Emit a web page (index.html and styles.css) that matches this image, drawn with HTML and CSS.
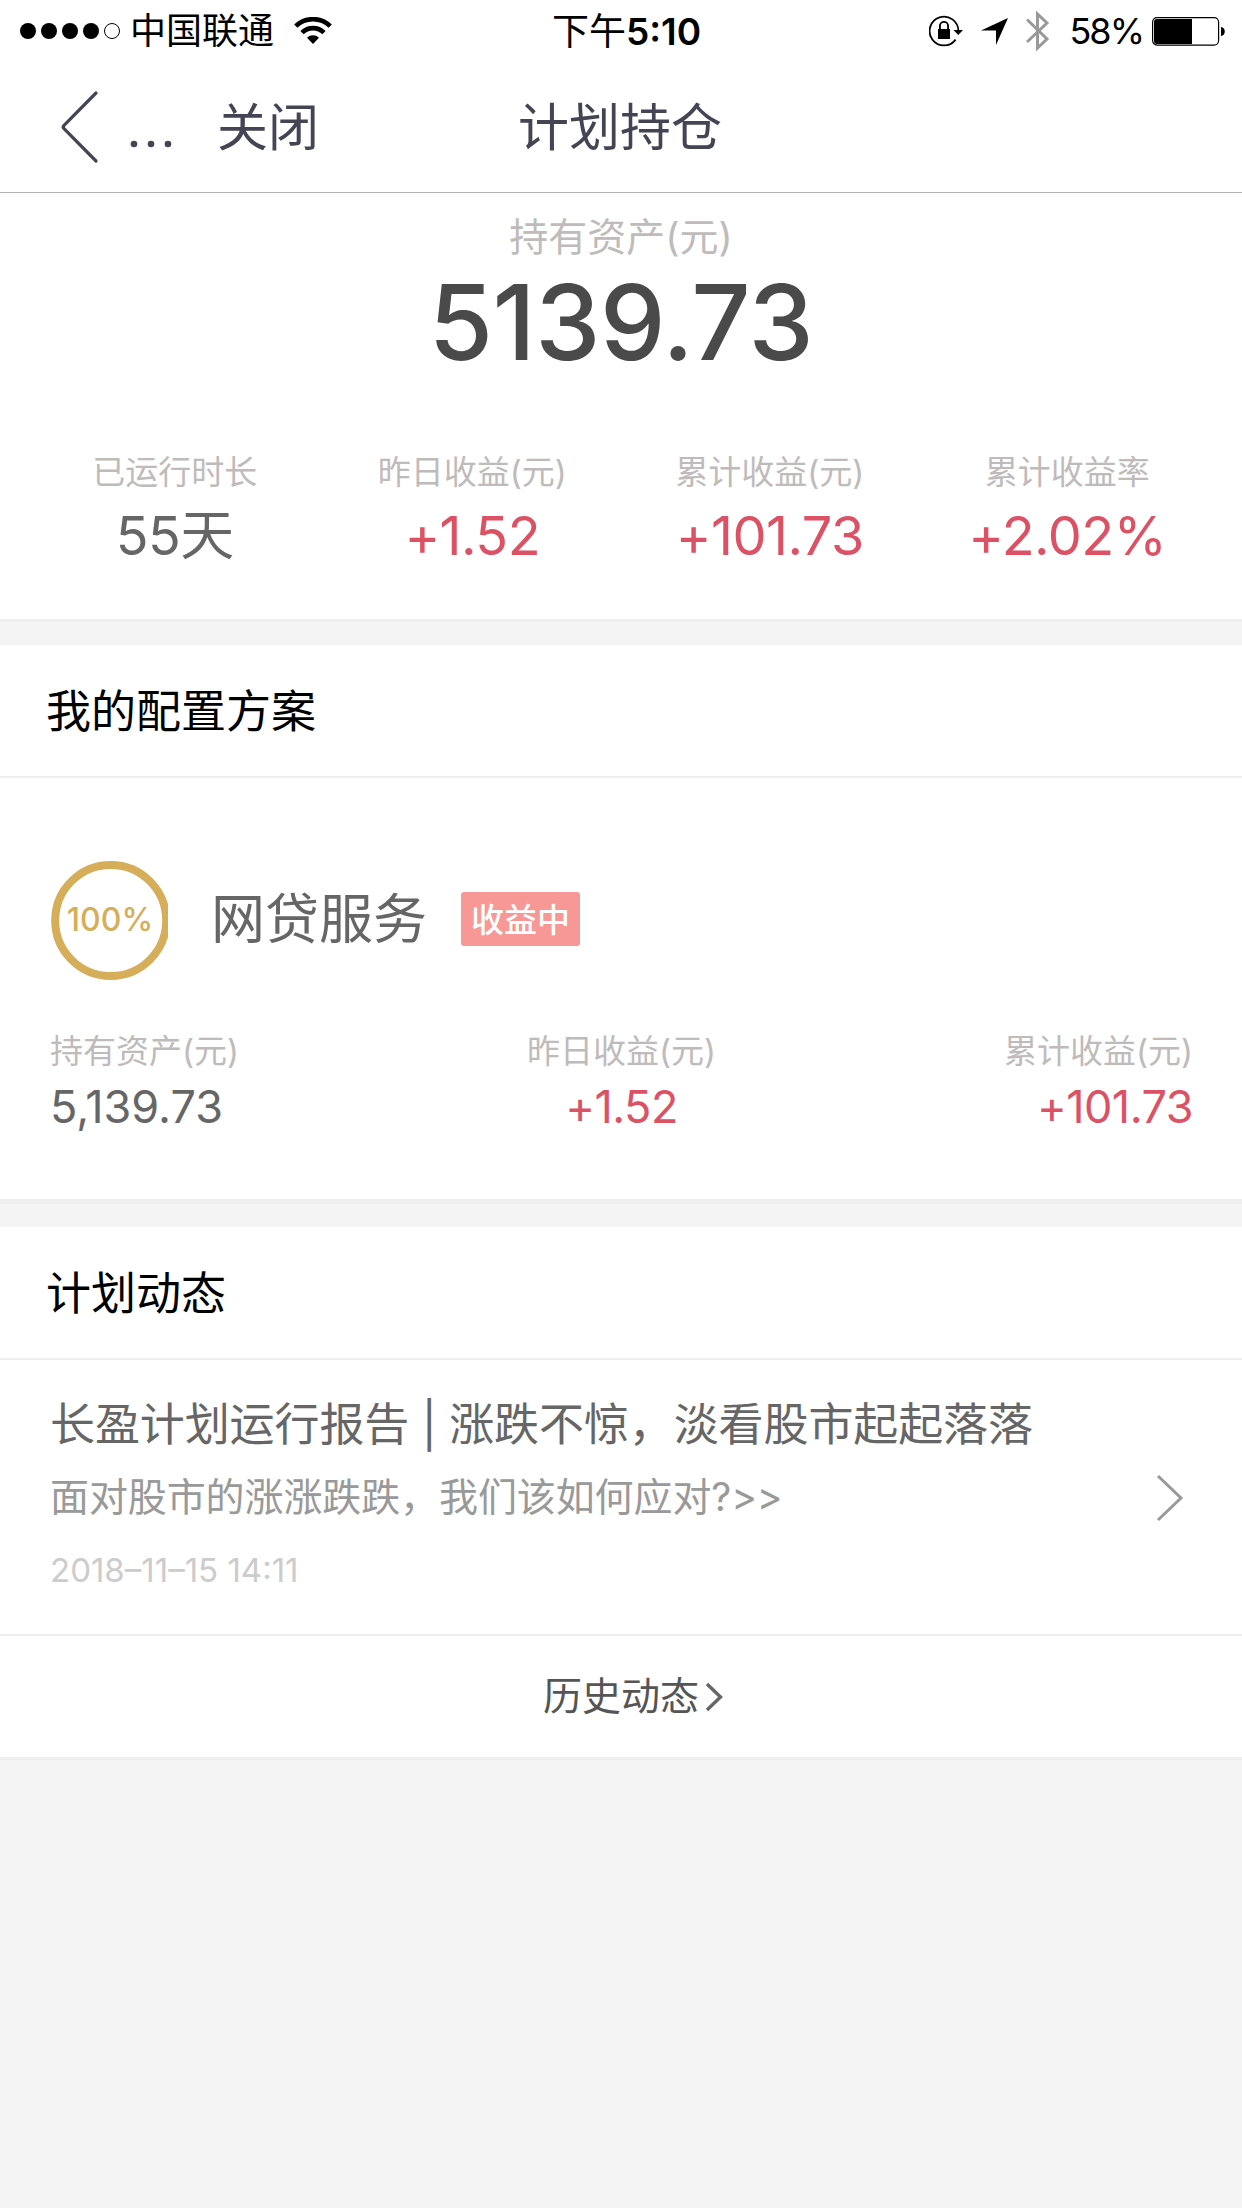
FILE: index.html
```
<!DOCTYPE html>
<html lang="zh-CN">
<head>
    <meta charset="UTF-8">
    <title>计划持仓</title>
    <link rel="stylesheet" href="styles.css">
</head>
<body>

<!-- status bar -->
<div class="status">
    <div class="status-left">
        <svg class="signal" width="96" height="18" viewBox="0 0 96 18">
            <circle cx="9" cy="9" r="8"/><circle cx="30" cy="9" r="8"/><circle cx="51" cy="9" r="8"/><circle cx="72" cy="9" r="8"/>
            <circle cx="93" cy="9" r="7.5" fill="none" stroke="#000" stroke-width="1"/>
        </svg>
        <span class="carrier">中国联通</span>
        <svg class="wifi" width="38" height="28" viewBox="0 0 38 28">
            <path d="M1.8 9.2a24.5 24.5 0 0 1 34.4 0M8 15.7a15.6 15.6 0 0 1 22 0" fill="none" stroke="#000" stroke-width="4.6"/>
            <path d="M13 20.8a8.5 8.5 0 0 1 12 0L19 27z"/>
        </svg>
    </div>
    <div class="time">下午<b>5:10</b></div>
    <div class="status-right">
        <svg width="34" height="32" viewBox="0 0 34 32">
            <path d="M26.6 24.6A14.4 14.4 0 1 1 29.4 16" fill="none" stroke="#000" stroke-width="1.8"/>
            <path d="M24.500 15h9.500l-4.700 5z"/>
            <path d="M9 14h12v10H9z"/>
            <path d="M10.900 15v-4a4.100 4.100 0 0 1 8.200 0v4" fill="none" stroke="#000" stroke-width="1.900"/>
        </svg>
        <svg class="arrow" width="27" height="27" viewBox="0 0 27 27"><path d="M27 0L15 27V12.500H0z"/></svg>
        <svg class="bluetooth" width="24" height="42" viewBox="0 0 24 42">
            <path d="M1 9.500L21 29L11.500 38V4L21 13L1 32" fill="none" stroke="#999" stroke-width="3"/>
        </svg>
        <span class="percent">58%</span>
        <svg width="74" height="30" viewBox="0 0 74 30">
            <rect x=".6" y="1.600" width="66" height="27.500" rx="4.500" fill="none" stroke="#000" stroke-width="1.200"/>
            <path d="M5 3h35v25H5a3 3 0 0 1-3-3V6a3 3 0 0 1 3-3zM69 11c5 0 5 9 0 9z"/>
        </svg>
    </div>
</div>

<!-- nav bar -->
<div class="nav">
    <svg class="back" width="40" height="76" viewBox="0 0 40 76">
        <path d="M36 4L4 36.300Q2.300 38 4 39.700L36 72" fill="none" stroke="#444455" stroke-width="3.200" stroke-linecap="round"/>
    </svg>
    <svg class="more" width="42" height="8" viewBox="0 0 42 8"><circle cx="4" cy="4" r="3.300"/><circle cx="21" cy="4" r="3.300"/><circle cx="38" cy="4" r="3.300"/></svg>
    <span class="close">关闭</span>
    <h1>计划持仓</h1>
</div>

<!-- total assets -->
<div class="summary">
    <div class="total-label">持有资产(元)</div>
    <div class="total">5139.73</div>
    <div class="stats">
        <div class="stat"><div class="label">已运行时长</div><div class="value">55天</div></div>
        <div class="stat"><div class="label">昨日收益(元)</div><div class="value red">+1.52</div></div>
        <div class="stat"><div class="label">累计收益(元)</div><div class="value red">+101.73</div></div>
        <div class="stat"><div class="label">累计收益率</div><div class="value red">+2.02%</div></div>
    </div>
</div>

<!-- my plan -->
<div class="card plan">
    <h2>我的配置方案</h2>
    <div class="plan-head">
        <div class="ring">
            <svg width="117" height="120" viewBox="0 0 117 120"><circle cx="59.700" cy="60.500" r="55.500" fill="none" stroke="#d6ae5a" stroke-width="8"/></svg>
            <span>100%</span>
        </div>
        <div class="plan-name">网贷服务</div>
        <div class="badge">收益中</div>
    </div>
    <div class="plan-data">
        <div class="item"><div class="label">持有资产(元)</div><div class="num">5,139.73</div></div>
        <div class="item center"><div class="label">昨日收益(元)</div><div class="num red">+1.52</div></div>
        <div class="item right"><div class="label">累计收益(元)</div><div class="num red">+101.73</div></div>
    </div>
</div>

<!-- news -->
<div class="card news">
    <h2>计划动态</h2>
    <div class="news-item">
        <div class="news-text">
            <div class="news-title">长盈计划运行报告 | 涨跌不惊，淡看股市起起落落</div>
            <div class="news-desc">面对股市的涨涨跌跌，我们该如何应对?&gt;&gt;</div>
            <div class="news-date">2018–11–15 14:11</div>
        </div>
        <svg width="28" height="48" viewBox="0 0 28 48"><path d="M2 2l23 22L2 46" fill="none" stroke="#999" stroke-width="3"/></svg>
    </div>
    <div class="history">
        <span>历史动态</span>
        <svg width="18" height="30" viewBox="0 0 18 30"><path d="M2 2l13.500 13L2 28" fill="none" stroke="#666" stroke-width="3.400"/></svg>
    </div>
</div>

</body>
</html>
```
FILE: styles.css
```
* {
    box-sizing: border-box;
}
body {
    margin: 0;
    background: #f4f4f4;
    font-family: Inter, "Noto Sans CJK SC", sans-serif;
    color: #666;
}
h1, h2 {
    margin: 0;
    font-weight: 400;
}
svg {
    display: block;
    flex: none;
}
.red {
    color: #dc5264;
}

/* status bar */
.status {
    display: grid;
    grid-template-columns: 1fr auto 1fr;
    align-items: center;
    height: 60px;
    padding: 0 16px 0 19px;
    background: #fff;
    color: #000;
    font-size: 36px;
    line-height: 63px;
}
.status-left, .status-right {
    display: flex;
    align-items: center;
    height: 60px;
}
.status-right {
    justify-content: flex-end;
}
.status svg {
    margin-top: -1px;
}
.signal {
    overflow: visible;
}
.carrier {
    margin-left: 15px;
}
.wifi {
    margin-left: 20px;
}
.time {
    padding-left: 8px;
    font-size: 37px;
}
.time b {
    font-weight: 600;
}
.arrow {
    margin-left: 18px;
}
.bluetooth {
    margin-left: 18px;
}
.percent {
    margin: 0 9px 0 19px;
    letter-spacing: -2px;
}

/* nav bar */
.nav {
    display: grid;
    grid-template-columns: 70px 87px 301px auto;
    align-items: center;
    height: 133px;
    padding-left: 60px;
    border-bottom: 1px solid #b2b2b2;
    background: #fff;
    color: #444455;
    fill: #444455;
    font-size: 51px;
    line-height: 135px;
}
.nav .back {
    margin-top: -2px;
}
.nav .more {
    margin-top: 32px;
}
.nav h1 {
    font-size: 51px;
}

/* total assets */
.summary {
    height: 429px;
    padding-top: 15px;
    background: #fff;
    border-bottom: 3px solid #eee;
    text-align: center;
}
.total-label {
    font-size: 39px;
    line-height: 58px;
    color: #bfbbbb;
}
.total {
    font-size: 104px;
    font-weight: 500;
    line-height: 112px;
    letter-spacing: -0.5px;
    color: #4a4a4a;
}
.stats {
    display: grid;
    grid-template-columns: repeat(4, 1fr);
    padding: 72px 26px 0;
}
.label {
    font-size: 33px;
    line-height: 44px;
    color: #bfbbbb;
}
.value {
    font-size: 54px;
    line-height: 84px;
    letter-spacing: -0.5px;
}

/* cards */
.card {
    margin-top: 23px;
    background: #fff;
}
.card h2 {
    height: 133px;
    padding-left: 46px;
    border-bottom: 2px solid #eee;
    color: #000;
    font-size: 45px;
    line-height: 134px;
}
.plan {
    height: 559px;
    border-bottom: 5px solid #eee;
}
.plan-head {
    display: flex;
    align-items: center;
    padding: 82px 51px 0;
}
.ring {
    display: grid;
    width: 117px;
    height: 120px;
}
.ring svg, .ring span {
    grid-area: 1 / 1;
}
.ring span {
    padding-left: 1px;
    text-align: center;
    line-height: 120px;
    font-size: 32px;
    font-weight: 500;
    color: #d6ae5a;
}
.plan-name {
    margin-left: 43px;
    font-size: 54px;
    line-height: 84px;
}
.badge {
    width: 119px;
    height: 54px;
    margin: -2px 0 0 34px;
    border-radius: 3px;
    background: #f89896;
    color: #fff;
    font-size: 33px;
    font-weight: 500;
    line-height: 56px;
    text-align: center;
}
.plan-data {
    display: grid;
    grid-template-columns: repeat(3, 1fr);
    padding: 49px 49px 0 50px;
}
.center {
    text-align: center;
}
.right {
    text-align: right;
}
.num {
    font-size: 45px;
    line-height: 68px;
}
.num.red {
    letter-spacing: -0.5px;
}

/* news */
.news {
    height: 533px;
    border-bottom: 3px solid #eee;
}
.news-item {
    display: flex;
    align-items: center;
    justify-content: space-between;
    height: 276px;
    padding: 2px 58px 0 50px;
    border-bottom: 2px solid #eee;
}
.news-title {
    font-size: 45px;
    line-height: 74px;
    letter-spacing: -0.1px;
}
.news-desc {
    font-size: 39px;
    line-height: 70px;
    letter-spacing: -0.1px;
    color: #999;
}
.news-date {
    font-size: 33px;
    line-height: 76px;
    color: #ccc;
}
.history {
    display: flex;
    align-items: center;
    height: 120px;
    padding: 0 0 6px 543px;
    font-size: 39px;
    color: #555;
}
.history svg {
    margin: 8px 0 0 6px;
}
```
